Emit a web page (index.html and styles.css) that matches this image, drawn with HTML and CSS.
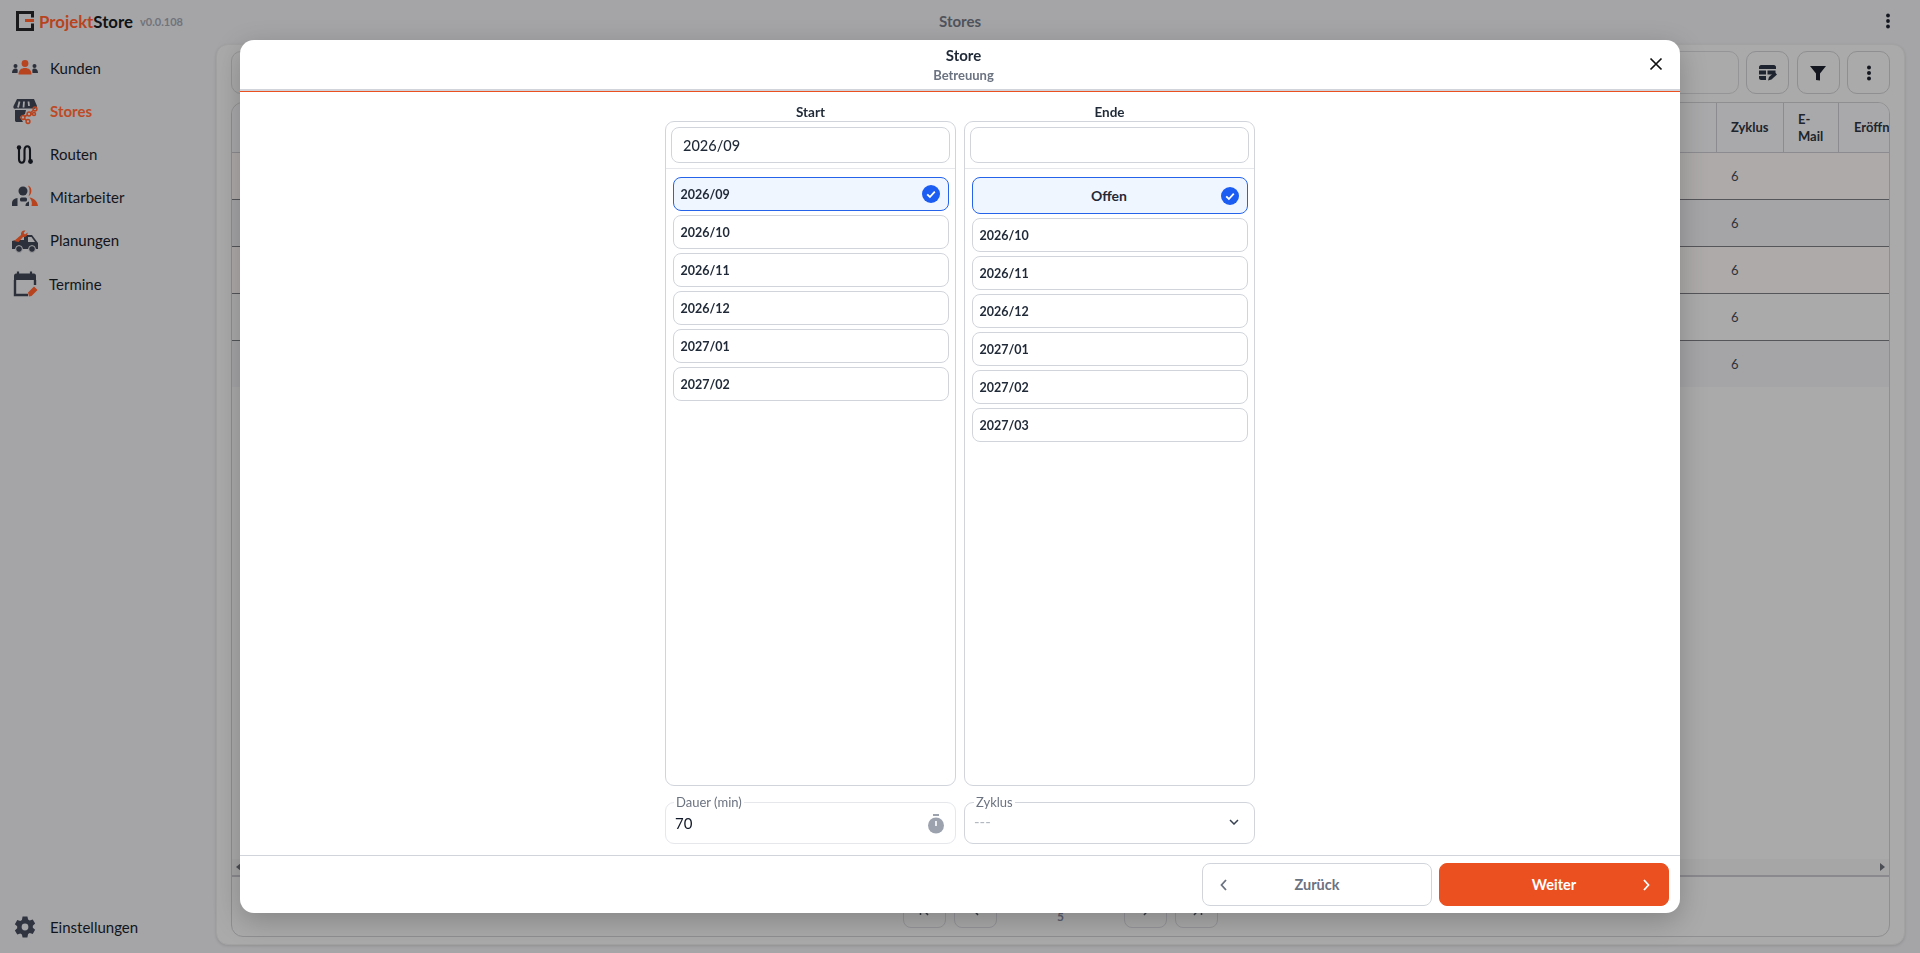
FILE: index.html
```html
<!DOCTYPE html>
<html lang="de">
<head>
<meta charset="utf-8">
<title>Stores</title>
<link rel="stylesheet" href="styles.css">
</head>
<body>
<div class="app">
  <header class="topbar">
    <div class="brand">
      <svg class="logo" width="20" height="22" viewBox="0 0 20 22"><path d="M1 1H19V7.500H16V4H4V18H16V13.500H19V21H1Z" fill="#1a1a1c"/><rect x="10" y="9" width="9" height="3" fill="#b8431f"/></svg>
      <span class="brand-name"><span class="brand-accent">Projekt</span>Store</span>
      <span class="version">v0.0.108</span>
    </div>
    <div class="page-title">Stores</div>
    <div class="top-actions">
      <svg width="6" height="16" viewBox="0 0 6 16"><circle cx="3" cy="2.500" r="1.900" fill="#14171f"/><circle cx="3" cy="8" r="1.900" fill="#14171f"/><circle cx="3" cy="13.500" r="1.900" fill="#14171f"/></svg>
    </div>
  </header>
  <div class="layout">
    <nav class="sidebar">
      <a class="nav-item">
        <svg class="nav-icon" viewBox="0 0 28 28"><circle cx="14" cy="9.500" r="3.400" fill="#b8431f"/><path d="M7.500 20.500c0-4.500 2.800-6.500 6.500-6.500s6.500 2 6.500 6.500Z" fill="#b8431f"/><circle cx="4.500" cy="12" r="2" fill="#2b303a"/><path d="M1 19c0-2.800 1.400-4.500 3.500-4.500S7 15.500 6.500 19Z" fill="#2b303a"/><circle cx="23.500" cy="12" r="2" fill="#2b303a"/><path d="M27 19c0-2.800-1.400-4.500-3.500-4.500S21 15.500 21.500 19Z" fill="#2b303a"/></svg>
        <span>Kunden</span>
      </a>
      <a class="nav-item active">
        <svg class="nav-icon" viewBox="0 0 28 28"><path d="M6 2H23L26 9C26 11 24 12.500 22 11.500H5C3 12.500 2 11 2.500 9Z" fill="#2b303a"/><path d="M8.500 4.500 7 10.500M13 4.500 12.500 10.500M17.500 4.500 18 9" stroke="#a5a5a7" stroke-width="1.800" fill="none"/><path d="M4 13H15L14 17 9 20 12 25H6C4.500 25 4 24.500 4 23Z" fill="#2b303a"/><g fill="none" stroke="#b8431f" stroke-width="1.500"><circle cx="24" cy="12" r="1.900"/><circle cx="18" cy="17" r="1.900"/><circle cx="23" cy="17" r="1.500"/><circle cx="12" cy="20.500" r="1.900"/><circle cx="17" cy="24.500" r="1.900"/><path d="M16.300 18 13.700 19.500M13.500 21.800 15.500 23.500M19.900 17 21.500 17M19.500 15.800 22.500 13.200"/></g></svg>
        <span>Stores</span>
      </a>
      <a class="nav-item">
        <svg class="nav-icon" viewBox="0 0 28 28"><path d="M8 8V19C8 24 13.500 24 13.500 19V10C13.500 5 19 5 19 10V21" fill="none" stroke="#12151c" stroke-width="2.100"/><circle cx="8" cy="7.500" r="2.200" fill="#12151c"/><circle cx="19.500" cy="21.500" r="2.400" fill="#12151c"/></svg>
        <span>Routen</span>
      </a>
      <a class="nav-item">
        <svg class="nav-icon" viewBox="0 0 28 28"><circle cx="12" cy="8" r="4.500" fill="#2b303a"/><path d="M17 2.500C21.500 4 21.500 11 17.500 13.500 19 9.500 19 6 17 2.500Z" fill="#b8431f"/><path d="M1 23V20C1 17 3.500 15.500 6.500 15V23Z" fill="#2b303a"/><rect x="9" y="14.500" width="7" height="4" rx="1.500" fill="#2b303a"/><path d="M14.500 23C14.500 20 16 19.500 18 18.500V23Z" fill="#2b303a"/><path d="M18.500 14.500C23 15 26.500 18.500 27 23H20.500C21.500 20 20.500 17 18.500 14.500Z" fill="#b8431f"/></svg>
        <span>Mitarbeiter</span>
      </a>
      <a class="nav-item">
        <svg class="nav-icon" viewBox="0 0 28 28"><path d="M1 15V23H27V17L21 9H13V14H5Z" fill="#2b303a"/><path d="M17 11H20.500L24 16H17Z" fill="#a5a5a7"/><circle cx="8" cy="23" r="3.400" fill="#2b303a" stroke="#a5a5a7" stroke-width="1"/><circle cx="21" cy="23" r="3.400" fill="#2b303a" stroke="#a5a5a7" stroke-width="1"/><path d="M3 15 10 9C9.500 6 11.500 4 14.500 4.500L12.500 7 14 8.500 16.500 6.500C17 9 15 11.500 12 11L7.500 16Z" fill="#b8431f"/></svg>
        <span>Planungen</span>
      </a>
      <a class="nav-item">
        <svg class="nav-icon" viewBox="0 0 28 28"><path d="M7 1.500V5M20 1.500V5" stroke="#2b303a" stroke-width="2.200"/><path d="M5 3.500H23C24 3.500 25 4.500 25 5.500V10H3V5.500C3 4.500 4 3.500 5 3.500Z" fill="#2b303a"/><path d="M4 10V25H17" fill="none" stroke="#2b303a" stroke-width="2.400"/><path d="M24 10V15" fill="none" stroke="#2b303a" stroke-width="2.400"/><path d="M18 26.500 17 22.500 23 16.500 26.500 20 20.500 26Z" fill="#b8431f"/></svg>
        <span class="nudge">Termine</span>
      </a>
      <a class="nav-item settings">
        <svg class="nav-icon" viewBox="-2.500 -2.500 29 29"><path fill="#2f3440" fill-rule="evenodd" d="M9.500 1h5l.7 3.200 1.700 1 3.100-1 2.500 4.300-2.400 2.200v2l2.400 2.200-2.500 4.300-3.100-1-1.700 1L14.500 23h-5l-.7-3.200-1.700-1-3.100 1L1.500 15.500l2.400-2.200v-2L1.500 9.100 4 4.800l3.100 1 1.700-1ZM12 8.500a3.500 3.500 0 1 0 0 7 3.500 3.500 0 0 0 0-7Z"/></svg>
        <span>Einstellungen</span>
      </a>
    </nav>
    <main class="panel">
      <div class="toolbar">
        <div class="search-bar"></div>
        <button class="tool-btn">
          <svg width="18" height="16" viewBox="0 0 18 16"><path d="M2 0H15C16 0 17 1 17 2V4H0V2C0 1 1 0 2 0Z" fill="#1f2530"/><rect x="0" y="5.500" width="7" height="4" fill="#1f2530"/><rect x="8.500" y="5.500" width="8" height="4" fill="#1f2530"/><path d="M0 11H7V15H2C1 15 0 14 0 13Z" fill="#1f2530"/><path d="M9 15.500 10 12 15.500 7 18 9.500 12.500 14.500Z" fill="#1f2530"/></svg>
        </button>
        <button class="tool-btn">
          <svg width="16" height="16" viewBox="0 0 16 16"><path d="M0 1H16L10 8.500V15.500L6 15V8.500Z" fill="#14171f"/></svg>
        </button>
        <button class="tool-btn">
          <svg width="6" height="16" viewBox="0 0 6 16"><circle cx="3" cy="2.500" r="2" fill="#14171f"/><circle cx="3" cy="8" r="2" fill="#14171f"/><circle cx="3" cy="13.500" r="2" fill="#14171f"/></svg>
        </button>
      </div>
      <section class="table">
        <div class="row head">
          <div class="cell"></div><div class="cell">Zyklus</div><div class="cell">E-<br>Mail</div><div class="cell nowrap">Eröffnung</div>
        </div>
        <div class="row warm"><div class="cell"></div><div class="cell">6</div><div class="cell"></div><div class="cell"></div></div>
        <div class="row shade"><div class="cell"></div><div class="cell">6</div><div class="cell"></div><div class="cell"></div></div>
        <div class="row warm"><div class="cell"></div><div class="cell">6</div><div class="cell"></div><div class="cell"></div></div>
        <div class="row plain"><div class="cell"></div><div class="cell">6</div><div class="cell"></div><div class="cell"></div></div>
        <div class="row shade last"><div class="cell"></div><div class="cell">6</div><div class="cell"></div><div class="cell"></div></div>
        <div class="table-space"></div>
        <div class="scrollbar"><span class="arrow-left"></span><span class="arrow-right"></span></div>
        <div class="pager">
          <div class="pager-group">
            <span class="page-btn"><svg width="12" height="12" viewBox="0 0 12 12"><path d="M1.500 1V11M9 1 4.500 6 9 11" fill="none" stroke="#3a3d45" stroke-width="1.500"/></svg></span>
            <span class="page-btn"><svg width="12" height="12" viewBox="0 0 12 12"><path d="M8 1 3.500 6 8 11" fill="none" stroke="#3a3d45" stroke-width="1.500"/></svg></span>
          </div>
          <div class="page-number">5</div>
          <div class="pager-group">
            <span class="page-btn"><svg width="12" height="12" viewBox="0 0 12 12"><path d="M4 1 8.500 6 4 11" fill="none" stroke="#3a3d45" stroke-width="1.500"/></svg></span>
            <span class="page-btn"><svg width="12" height="12" viewBox="0 0 12 12"><path d="M10.500 1V11M3 1 7.500 6 3 11" fill="none" stroke="#3a3d45" stroke-width="1.500"/></svg></span>
          </div>
        </div>
      </section>
    </main>
  </div>
</div>

<div class="modal">
  <div class="modal-head">
    <div class="modal-title">Store</div>
    <div class="modal-sub">Betreuung</div>
    <svg class="modal-close" width="14" height="14" viewBox="0 0 14 14"><path d="M1.500 1.500 12.500 12.500M12.500 1.500 1.500 12.500" stroke="#111" stroke-width="1.700"/></svg>
  </div>
  <div class="modal-body">
    <div class="col">
      <div class="col-label">Start</div>
      <div class="picker">
        <div class="picker-search"><div class="picker-input">2026/09</div></div>
        <div class="picker-list">
          <div class="opt selected">2026/09
            <svg class="check" width="18" height="18" viewBox="0 0 18 18"><circle cx="9" cy="9" r="9" fill="#1b5cf3"/><path d="M5.200 9.300 7.900 12 12.800 6.600" fill="none" stroke="#fff" stroke-width="1.800"/></svg>
          </div>
          <div class="opt">2026/10</div>
          <div class="opt">2026/11</div>
          <div class="opt">2026/12</div>
          <div class="opt">2027/01</div>
          <div class="opt">2027/02</div>
        </div>
      </div>
      <fieldset class="field light">
        <legend>Dauer (min)</legend>
        <span class="field-value">70</span>
        <svg width="18" height="20" viewBox="0 0 18 20"><rect x="6" y="0" width="6" height="2" fill="#9ca3af"/><circle cx="9" cy="11.500" r="8" fill="#9ca3af"/><rect x="8.200" y="7" width="1.600" height="5" fill="#fff"/></svg>
      </fieldset>
    </div>
    <div class="col">
      <div class="col-label">Ende</div>
      <div class="picker">
        <div class="picker-search"><div class="picker-input"></div></div>
        <div class="picker-list">
          <div class="opt selected open">Offen
            <svg class="check" width="18" height="18" viewBox="0 0 18 18"><circle cx="9" cy="9" r="9" fill="#1b5cf3"/><path d="M5.200 9.300 7.900 12 12.800 6.600" fill="none" stroke="#fff" stroke-width="1.800"/></svg>
          </div>
          <div class="opt">2026/10</div>
          <div class="opt">2026/11</div>
          <div class="opt">2026/12</div>
          <div class="opt">2027/01</div>
          <div class="opt">2027/02</div>
          <div class="opt">2027/03</div>
        </div>
      </div>
      <fieldset class="field select">
        <legend>Zyklus</legend>
        <span class="field-value muted">---</span>
        <svg width="10" height="6" viewBox="0 0 10 6"><path d="M1 1 5 5 9 1" fill="none" stroke="#374151" stroke-width="1.500"/></svg>
      </fieldset>
    </div>
  </div>
  <div class="modal-foot">
    <button class="foot-btn back">
      <svg width="7" height="12" viewBox="0 0 7 12"><path d="M6 1 1.500 6 6 11" fill="none" stroke="#6b7280" stroke-width="1.800"/></svg>
      <span>Zurück</span>
    </button>
    <button class="foot-btn next">
      <span>Weiter</span>
      <svg width="7" height="12" viewBox="0 0 7 12"><path d="M1 1 5.500 6 1 11" fill="none" stroke="#fff" stroke-width="1.800"/></svg>
    </button>
  </div>
</div>
</body>
</html>
```

FILE: styles.css
```css
* { box-sizing: border-box; }
html, body { margin: 0; padding: 0; height: 100%; overflow: hidden; }
body { font-family: "Lato", "Noto Sans", sans-serif; background: #a5a5a7; color: #12151c; }

.app { display: flex; flex-direction: column; height: 953px; }

.topbar { height: 44px; display: grid; grid-template-columns: 1fr auto 1fr; align-items: center; padding: 0 29px 2px 29px; flex: none; }
.brand { display: flex; align-items: center; margin-left: -14px; }
.logo { margin-right: 4px; }
.brand-name { font-size: 16.800px; font-weight: 700; color: #101216; }
.brand-accent { color: #b8431f; }
.version { font-size: 11px; font-weight: 700; color: #71737b; margin-left: 7px; }
.page-title { font-size: 15px; font-weight: 700; color: #50535b; }
.top-actions { display: flex; justify-content: flex-end; }

.layout { flex: 1; display: flex; min-height: 0; }
.sidebar { width: 216px; flex: none; display: flex; flex-direction: column; padding: 2px 0 0 11px; }
.nav-item { height: 43.200px; display: flex; align-items: center; gap: 11px; font-size: 15px; color: #12151c; flex: none; }
.nav-item.active { color: #bd4a26; font-weight: 700; }
.nav-icon { width: 28px; height: 28px; flex: none; }
.nudge { margin-left: -1px; }
.settings { margin-top: auto; margin-bottom: 4px; }

.panel { flex: 1; min-width: 0; margin: 0 15px 8px 0; padding: 6px 14px 7px 14px; background: #aaaaaa; border-radius: 12px; border: 1px solid #a2a2a3; box-shadow: 0 1px 3px rgba(0,0,0,.12); display: flex; flex-direction: column; gap: 8px; }
.toolbar { display: flex; gap: 7.500px; height: 43px; flex: none; }
.search-bar { flex: 1; border: 1px solid #959597; border-radius: 10px; }
.tool-btn { width: 43px; border: 1px solid #8f8f92; border-radius: 10px; background: transparent; display: flex; align-items: center; justify-content: center; padding: 0; }

.table { flex: 1; min-height: 0; border: 1px solid #8f8f92; border-radius: 12px; overflow: hidden; display: flex; flex-direction: column; background: #aaaaaa; }
.row { display: grid; grid-template-columns: 1fr 67px 55px 50px; height: 47px; flex: none; border-bottom: 1px solid #55565a; font-size: 13px; color: #2e323a; }
.row .cell { display: flex; align-items: center; padding-left: 14px; }
.row.head { height: 50px; background: #a9a9ab; border-bottom: 1px solid #8c8c90; font-weight: 700; color: #20242c; line-height: 17px; }
.row.head .cell { border-right: 1px solid #8c8c90; }
.row.head .cell:last-child { border-right: 0; padding-left: 15px; overflow: hidden; }
.nowrap { white-space: nowrap; }
.row.warm { background: #adaaa9; }
.row.shade { background: #a5a5a7; }
.row.plain { background: #aaaaab; }
.row.last { border-bottom: 0; height: 46px; padding-bottom: 1px; }
.table-space { flex: 1; }
.scrollbar { height: 18px; flex: none; background: #a6a6a7; border-bottom: 2px solid #8a8a8e; display: flex; justify-content: space-between; align-items: center; padding: 0 4px; }
.arrow-left { border: 4px solid transparent; border-right: 5px solid #4c4e55; border-left: 0; }
.arrow-right { border: 4px solid transparent; border-left: 5px solid #4c4e55; border-right: 0; }
.pager { height: 59px; flex: none; display: flex; justify-content: center; align-items: flex-end; gap: 0; padding-bottom: 8px; }
.pager-group { display: flex; gap: 8px; }
.page-btn { width: 43px; height: 36px; border: 1px solid #96969a; border-radius: 8px; display: flex; align-items: center; justify-content: center; }
.page-number { width: 127px; text-align: center; font-size: 12px; font-weight: 700; color: #5d6070; align-self: flex-end; padding-bottom: 4px; }

.modal { position: fixed; left: 240px; top: 40px; width: 1440px; height: 873px; background: #fff; border-radius: 14px; box-shadow: 0 8px 28px rgba(0,0,0,.22); display: flex; flex-direction: column; overflow: hidden; color: #1f2937; }
.modal-head { position: relative; height: 52px; flex: none; display: flex; flex-direction: column; align-items: center; border-bottom: 1px solid #ea5020; box-shadow: inset 0 -2px 0 #d1d5db; padding: 6px 0 0 7px; }
.modal-title { font-size: 15px; font-weight: 700; line-height: 18px; }
.modal-sub { font-size: 13px; font-weight: 700; line-height: 16px; color: #6b7280; margin-top: 3px; }
.modal-close { position: absolute; right: 17px; top: 17px; }

.modal-body { flex: 1; min-height: 0; display: flex; justify-content: center; gap: 8px; padding: 9px 0 11px; }
.col { width: 291px; display: flex; flex-direction: column; }
.col-label { height: 20px; flex: none; text-align: center; font-size: 13.500px; font-weight: 700; line-height: 22px; }
.picker { flex: 1; min-height: 0; border: 1px solid #d1d5db; border-radius: 9px; display: flex; flex-direction: column; }
.picker-search { padding: 5px 5px 5px 5px; border-bottom: 1px solid #e5e7eb; flex: none; }
.picker-input { height: 36px; border: 1px solid #d1d5db; border-radius: 8px; padding: 0 11px; display: flex; align-items: center; font-size: 14.500px; font-weight: 500; }
.picker-list { padding: 8px 6.500px; display: flex; flex-direction: column; gap: 4px; }
.opt { height: 34px; border: 1px solid #d1d5db; border-radius: 8px; padding: 0 7px; display: flex; align-items: center; justify-content: space-between; font-size: 12.500px; font-weight: 700; }
.opt.selected { background: #eff6ff; border-color: #2563eb; padding-right: 8px; }
.opt.open { position: relative; height: 37px; justify-content: center; font-size: 14px; }
.open .check { position: absolute; right: 8px; top: 9px; }

.field { margin: 9px 0 0; padding: 3px 10px 0 9px; height: 49px; flex: none; border: 1px solid #d1d5db; border-radius: 9px; display: flex; align-items: center; justify-content: space-between; min-width: 0; }
.field svg { margin-top: 2px; }
.field.light { border-color: #e5e7eb; }
.field.light legend { margin-left: -1px; }
.field.select { padding-right: 15px; }
.field legend { font-size: 13px; color: #6b7280; padding: 0 2px; line-height: 14px; }
.field-value { font-size: 15px; color: #111827; }
.field-value.muted { color: #b3b8c1; font-size: 15px; margin-left: 0; }

.modal-foot { height: 58px; flex: none; border-top: 1px solid #d1d5db; display: flex; justify-content: flex-end; gap: 7px; padding: 7px 11px 0 0; }
.foot-btn { position: relative; width: 230px; height: 43px; border-radius: 8px; font-family: inherit; font-size: 14.500px; font-weight: 700; display: flex; align-items: center; justify-content: center; padding: 0; }
.foot-btn svg { position: absolute; top: 15px; }
.back { background: #fff; border: 1px solid #d1d5db; color: #6b7280; }
.back svg { left: 17px; }
.next { background: #ea5020; border: 1px solid #ea5020; color: #fff; }
.next svg { right: 18px; }
```
